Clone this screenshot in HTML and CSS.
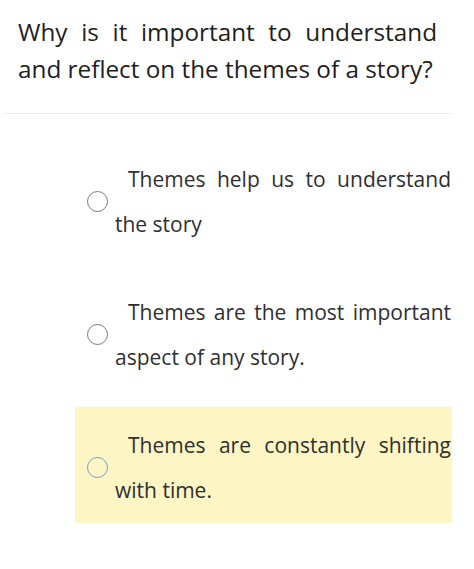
FILE: index.html
```html
<!DOCTYPE html>
<html lang="en">
<head>
<meta charset="utf-8">
<title>Question</title>
<link rel="stylesheet" href="styles.css">
</head>
<body>
<div class="page">
  <h1 class="question">Why is it important to understand and reflect on the themes of a story?</h1>
  <hr class="divider">
  <div class="options">
    <label class="option">
      <span class="radio"></span>
      <span class="option-text">Themes help us to understand the story</span>
    </label>
    <label class="option">
      <span class="radio"></span>
      <span class="option-text">Themes are the most important aspect of any story.</span>
    </label>
    <label class="option option-selected">
      <span class="radio radio-active"></span>
      <span class="option-text">Themes are constantly shifting with time.</span>
    </label>
  </div>
</div>
</body>
</html>
```

FILE: styles.css
```css
* { box-sizing: border-box; }
html, body {
  margin: 0;
  padding: 0;
  background: #ffffff;
}
body {
  font-family: "Open Sans", "Noto Sans", sans-serif;
  color: #222222;
}
.page {
  width: 474px;
  height: 569px;
  overflow: hidden;
}
.question {
  margin: 0;
  padding: 13px 0 0 18px;
  width: 437px;
  font-size: 24.3px;
  font-weight: 400;
  line-height: 37px;
  text-align: justify;
  color: #1e1e1e;
}
.divider {
  margin: 26px 0 0 4px;
  width: 449px;
  border: 0;
  height: 1px;
  background: #ececec;
}
.options {
  display: flex;
  flex-direction: column;
  gap: 17px;
  margin: 27px 0 0 75px;
  width: 377px;
}
.option {
  display: flex;
  align-items: center;
  gap: 7px;
  padding: 16px 1px 10px 12px;
  min-height: 116px;
}
.option-selected {
  background: #fdf5c4;
}
.radio {
  flex: none;
  width: 21px;
  height: 21px;
  border-radius: 50%;
  border: 1.6px solid #7a7a7a;
  margin-top: -1px;
}
.radio-active {
  border-color: #6f9fc3;
}
.option-text {
  flex: 1;
  font-size: 21px;
  line-height: 45px;
  text-align: justify;
  text-indent: 13px;
  color: #2f2f2f;
}
```
